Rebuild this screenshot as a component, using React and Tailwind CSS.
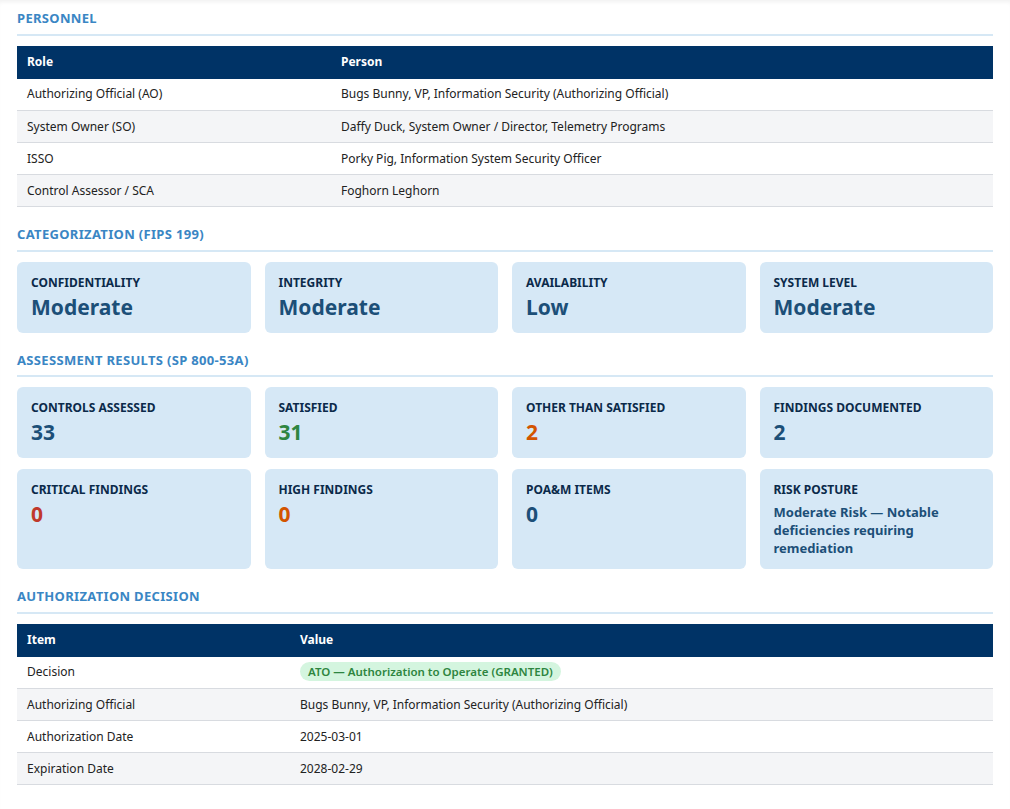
const F = { fontFamily: '"Noto Sans", "Open Sans", sans-serif' }

function Title({ children }) {
  return (
    <div className="mb-[10px] border-b-2 border-[#d6e8f5] pb-[5px] pt-[8px]">
      <h2 className="text-[13px] font-bold uppercase tracking-wide text-[#3a86c4]">{children}</h2>
    </div>
  )
}

function Table({ head, rows, split }) {
  return (
    <table className="w-full border-collapse text-[12px]">
      <thead>
        <tr className="bg-[#003366] text-white">
          <th className={`${split} h-[33px] px-[10px] text-left font-bold`}>{head[0]}</th>
          <th className="h-[33px] px-[10px] text-left font-bold">{head[1]}</th>
        </tr>
      </thead>
      <tbody>
        {rows.map((r, i) => (
          <tr key={i} className={`border-b border-[#d8dbe0] text-[#222] ${i % 2 ? "bg-[#f4f5f7]" : "bg-white"}`}>
            <td className="h-[32px] px-[10px]">{r[0]}</td>
            <td className="h-[32px] px-[10px]">{r[1]}</td>
          </tr>
        ))}
      </tbody>
    </table>
  )
}

function Card({ label, value, color = "text-[#1c4f78]", small }) {
  return (
    <div className="rounded-md bg-[#d6e8f6] px-[14px] pb-[12px] pt-[12px]">
      <div className="text-[12px] font-bold uppercase text-[#0b2a4a]">{label}</div>
      {small ? (
        <div className="mt-[4px] text-[13px] font-bold leading-[18px] text-[#1c4f78]">{value}</div>
      ) : (
        <div className={`mt-[1px] text-[21px] font-bold leading-[28px] ${color}`}>{value}</div>
      )}
    </div>
  )
}

export default function App() {
  return (
    <div style={F} className="min-h-[809px] bg-white px-[17px] pb-[10px] pt-[1px] shadow-[inset_0_4px_4px_-2px_rgba(0,0,0,0.06)]">
      <Title>Personnel</Title>
      <Table
        split="w-[314px]"
        head={["Role", "Person"]}
        rows={[
          ["Authorizing Official (AO)", "Bugs Bunny, VP, Information Security (Authorizing Official)"],
          ["System Owner (SO)", "Daffy Duck, System Owner / Director, Telemetry Programs"],
          ["ISSO", "Porky Pig, Information System Security Officer"],
          ["Control Assessor / SCA", "Foghorn Leghorn"],
        ]}
      />
      <div className="mt-[10px]"><Title>Categorization (FIPS 199)</Title></div>
      <div className="grid grid-cols-4 gap-[14px]">
        <Card label="Confidentiality" value="Moderate" />
        <Card label="Integrity" value="Moderate" />
        <Card label="Availability" value="Low" />
        <Card label="System Level" value="Moderate" />
      </div>
      <div className="mt-[10px]"><Title>Assessment Results (SP 800-53A)</Title></div>
      <div className="grid grid-cols-4 gap-[11px_14px]">
        <Card label="Controls Assessed" value="33" />
        <Card label="Satisfied" value="31" color="text-[#2e8540]" />
        <Card label="Other Than Satisfied" value="2" color="text-[#d35400]" />
        <Card label="Findings Documented" value="2" />
        <Card label="Critical Findings" value="0" color="text-[#c0392b]" />
        <Card label="High Findings" value="0" color="text-[#d35400]" />
        <Card label="POA&M Items" value="0" />
        <Card label="Risk Posture" value="Moderate Risk — Notable deficiencies requiring remediation" small />
      </div>
      <div className="mt-[10px]"><Title>Authorization Decision</Title></div>
      <Table
        split="w-[273px]"
        head={["Item", "Value"]}
        rows={[
          ["Decision", <span className="rounded-full bg-[#d4f5df] px-[8px] py-[2px] text-[11.5px] font-semibold text-[#2e8540]">ATO — Authorization to Operate (GRANTED)</span>],
          ["Authorizing Official", "Bugs Bunny, VP, Information Security (Authorizing Official)"],
          ["Authorization Date", "2025-03-01"],
          ["Expiration Date", "2028-02-29"],
        ]}
      />
    </div>
  )
}
